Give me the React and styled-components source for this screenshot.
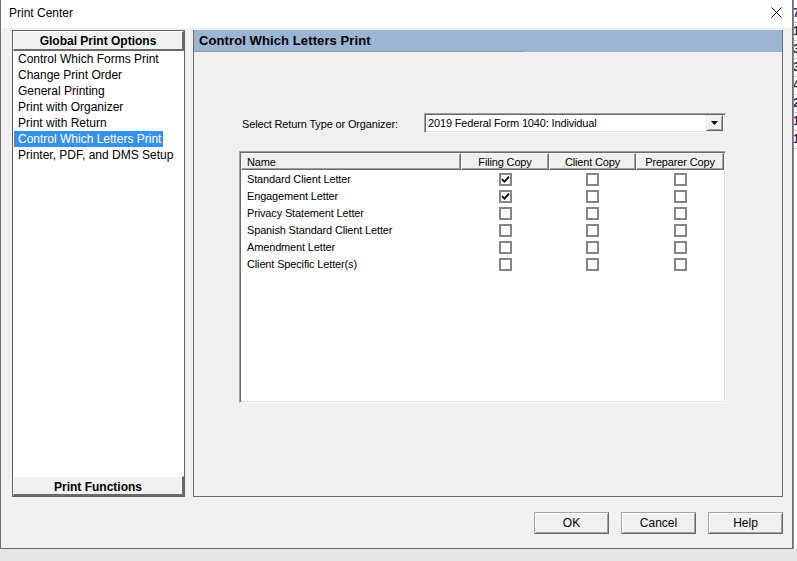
import React from "react";
import styled, { createGlobalStyle } from "styled-components";

const Global = createGlobalStyle`
  html, body { margin: 0; padding: 0; overflow: hidden; }
  body { font-family: "Liberation Sans", Arial, sans-serif; color: #000; }
  * { box-sizing: border-box; }
`;

const Page = styled.div`
  width: 797px;
  height: 561px;
  display: flex;
  background: #e6e6e6;
`;

const Window = styled.div`
  width: 793px;
  height: 549px;
  flex: none;
  display: flex;
  flex-direction: column;
  background: #f0f0f0;
  border: 1px solid #6f6f6f;
  border-top: none;
`;

const TitleBar = styled.div`
  height: 28px;
  flex: none;
  background: #fff;
  display: flex;
  align-items: center;
  justify-content: space-between;
  padding: 0 10px 3px 8px;
  font-size: 12px;
`;

const CloseIcon = styled.svg`
  width: 11px;
  height: 11px;
  display: block;
`;

const Body = styled.div`
  flex: 1;
  display: flex;
  flex-direction: column;
  padding: 2px 9px 0 11px;
`;

const Panels = styled.div`
  height: 467px;
  display: flex;
  gap: 8px;
`;

const LeftPanel = styled.div`
  width: 173px;
  display: flex;
  flex-direction: column;
  background: #fff;
  border: 1px solid #646464;
`;

const RaisedBar = styled.div`
  height: ${(p) => p.$h}px;
  flex: none;
  display: flex;
  align-items: center;
  justify-content: center;
  background: #f0f0f0;
  font-weight: bold;
  font-size: 12px;
  border-top: 1px solid #fff;
  border-left: 1px solid #fff;
  border-right: 2px solid #6a6a6a;
  border-bottom: 2px solid #6a6a6a;
  padding-top: ${(p) => p.$pt}px;
`;

const NavList = styled.div`
  flex: 1;
  display: flex;
  flex-direction: column;
  align-items: flex-start;
  padding: 0 0 0 1px;
`;

const NavItem = styled.div`
  height: 16px;
  line-height: 16px;
  font-size: 12px;
  padding: 0 2px 0 4px;
  white-space: nowrap;
  background: ${(p) => (p.$selected ? "#3790ea" : "transparent")};
  color: ${(p) => (p.$selected ? "#fff" : "#000")};
`;

const RightPanel = styled.div`
  width: 590px;
  display: flex;
  flex-direction: column;
  border-left: 1px solid #6b6b6b;
  border-right: 1px solid #6b6b6b;
  border-bottom: 1px solid #6b6b6b;
`;

const PanelHeader = styled.div`
  height: 22px;
  flex: none;
  background: #9bb5d3;
  display: flex;
`;

const PanelTitle = styled.div`
  width: 329px;
  height: 22px;
  border-bottom: 1px solid #8f98a4;
  font-weight: bold;
  font-size: 13px;
  line-height: 22px;
  padding-left: 5px;
  letter-spacing: 0.1px;
`;

const Content = styled.div`
  flex: 1;
  padding: 61px 0 0 45px;
  display: flex;
  flex-direction: column;
  font-size: 11px;
  letter-spacing: -0.15px;
`;

const SelectRow = styled.div`
  display: flex;
  align-items: center;
  height: 20px;
`;

const Label = styled.div`
  width: 185px;
  padding-left: 3px;
  padding-top: 2px;
`;

const SelectBox = styled.div`
  width: 302px;
  height: 20px;
  background: #fff;
  border-top: 1px solid #a0a0a0;
  border-left: 1px solid #a0a0a0;
  border-right: 1px solid #fff;
  border-bottom: 1px solid #fff;
  box-shadow: inset 1px 1px 0 #696969, inset -1px -1px 0 #e3e3e3;
  display: flex;
  align-items: center;
  justify-content: space-between;
  padding: 0 2px 0 3px;
`;

const DropButton = styled.div`
  width: 17px;
  height: 16px;
  background: #f0f0f0;
  border-top: 1px solid #e3e3e3;
  border-left: 1px solid #e3e3e3;
  border-right: 1px solid #696969;
  border-bottom: 1px solid #696969;
  box-shadow: inset 1px 1px 0 #fff, inset -1px -1px 0 #a0a0a0;
  display: flex;
  align-items: center;
  justify-content: center;
`;

const Table = styled.div`
  margin-top: 18px;
  width: 487px;
  height: 252px;
  background: #fff;
  border-top: 1px solid #a0a0a0;
  border-left: 1px solid #a0a0a0;
  border-right: 1px solid #fff;
  border-bottom: 1px solid #fff;
  box-shadow: inset 1px 1px 0 #696969, inset -1px -1px 0 #e3e3e3;
  padding: 1px 2px 2px 1px;
`;

const Grid = styled.div`
  display: grid;
  grid-template-columns: 220px 88px 87px 88px;
  grid-auto-rows: 17px;
`;

const HeadCell = styled.div`
  height: 17px;
  background: #f0f0f0;
  border-top: 1px solid #fff;
  border-left: 1px solid #fff;
  border-right: 1px solid #696969;
  border-bottom: 1px solid #696969;
  box-shadow: inset -1px -1px 0 #a0a0a0;
  display: flex;
  align-items: center;
  justify-content: ${(p) => (p.$left ? "flex-start" : "center")};
  padding-left: ${(p) => (p.$left ? "5px" : "0")};
  white-space: nowrap;
`;

const Cell = styled.div`
  display: flex;
  align-items: center;
  justify-content: ${(p) => (p.$left ? "flex-start" : "center")};
  padding-left: ${(p) => (p.$left ? "6px" : "0")};
  padding-top: 1px;
  white-space: nowrap;
`;

const Box = styled.div`
  width: 13px;
  height: 13px;
  border: 2px solid #858585;
  background: #fff;
  display: flex;
  align-items: center;
  justify-content: center;
`;

const Footer = styled.div`
  margin-top: 15px;
  display: flex;
  justify-content: flex-end;
  gap: 12px;
`;

const Button = styled.div`
  width: 75px;
  height: 22px;
  background: #f0f0f0;
  border: 1px solid #a6a6a6;
  border-right-color: #696969;
  border-bottom-color: #696969;
  box-shadow: inset 1px 1px 0 #fff, inset -1px -1px 0 #a0a0a0;
  display: flex;
  align-items: center;
  justify-content: center;
  font-size: 12px;
`;

const Strip = styled.div`
  flex: 1;
  height: 549px;
  background: #fff;
  border-left: 1px solid #8a8a8a;
  overflow: hidden;
  padding-top: 5px;
  display: flex;
  flex-direction: column;
`;

const StripDigit = styled.div`
  height: 18px;
  line-height: 16px;
  font-size: 12px;
  font-weight: bold;
  color: #3a2364;
  margin-left: -1px;
  border-bottom: 1px solid #c8c8c8;
`;

const navItems = [
  "Control Which Forms Print",
  "Change Print Order",
  "General Printing",
  "Print with Organizer",
  "Print with Return",
  "Control Which Letters Print",
  "Printer, PDF, and DMS Setup",
];

const letters = [
  ["Standard Client Letter", true, false, false],
  ["Engagement Letter", true, false, false],
  ["Privacy Statement Letter", false, false, false],
  ["Spanish Standard Client Letter", false, false, false],
  ["Amendment Letter", false, false, false],
  ["Client Specific Letter(s)", false, false, false],
];

const Check = ({ on }) => (
  <Box>
    {on && (
      <svg width="9" height="9" viewBox="0 0 9 9">
        <path d="M1 4.2 L3.4 6.6 L8 1.6" fill="none" stroke="#000" strokeWidth="1.8" />
      </svg>
    )}
  </Box>
);

export default function App() {
  return (
    <Page>
      <Global />
      <Window>
        <TitleBar>
          <span>Print Center</span>
          <CloseIcon viewBox="0 0 11 11">
            <path d="M0.5 0.5 L10.5 10.5 M10.5 0.5 L0.5 10.5" stroke="#000" strokeWidth="1" />
          </CloseIcon>
        </TitleBar>
        <Body>
          <Panels>
            <LeftPanel>
              <RaisedBar $h={20} $pt={1}>Global Print Options</RaisedBar>
              <NavList>
                {navItems.map((t) => (
                  <NavItem key={t} $selected={t === "Control Which Letters Print"}>
                    {t}
                  </NavItem>
                ))}
              </NavList>
              <RaisedBar $h={20} $pt={3}>Print Functions</RaisedBar>
            </LeftPanel>
            <RightPanel>
              <PanelHeader>
                <PanelTitle>Control Which Letters Print</PanelTitle>
              </PanelHeader>
              <Content>
                <SelectRow>
                  <Label>Select Return Type or Organizer:</Label>
                  <SelectBox>
                    <span>2019 Federal Form 1040: Individual</span>
                    <DropButton>
                      <svg width="7" height="4" viewBox="0 0 7 4">
                        <path d="M0 0 H7 L3.5 4 Z" fill="#000" />
                      </svg>
                    </DropButton>
                  </SelectBox>
                </SelectRow>
                <Table>
                  <Grid>
                    <HeadCell $left>Name</HeadCell>
                    <HeadCell>Filing Copy</HeadCell>
                    <HeadCell>Client Copy</HeadCell>
                    <HeadCell>Preparer Copy</HeadCell>
                    {letters.map(([name, a, b, c]) => (
                      <React.Fragment key={name}>
                        <Cell $left>{name}</Cell>
                        <Cell><Check on={a} /></Cell>
                        <Cell><Check on={b} /></Cell>
                        <Cell><Check on={c} /></Cell>
                      </React.Fragment>
                    ))}
                  </Grid>
                </Table>
              </Content>
            </RightPanel>
          </Panels>
          <Footer>
            <Button>OK</Button>
            <Button>Cancel</Button>
            <Button>Help</Button>
          </Footer>
        </Body>
      </Window>
      <Strip>
        {["7", "1", "3", "3", "4", "2", "1", "1"].map((d, i) => (
          <StripDigit key={i}>{d}</StripDigit>
        ))}
      </Strip>
    </Page>
  );
}
